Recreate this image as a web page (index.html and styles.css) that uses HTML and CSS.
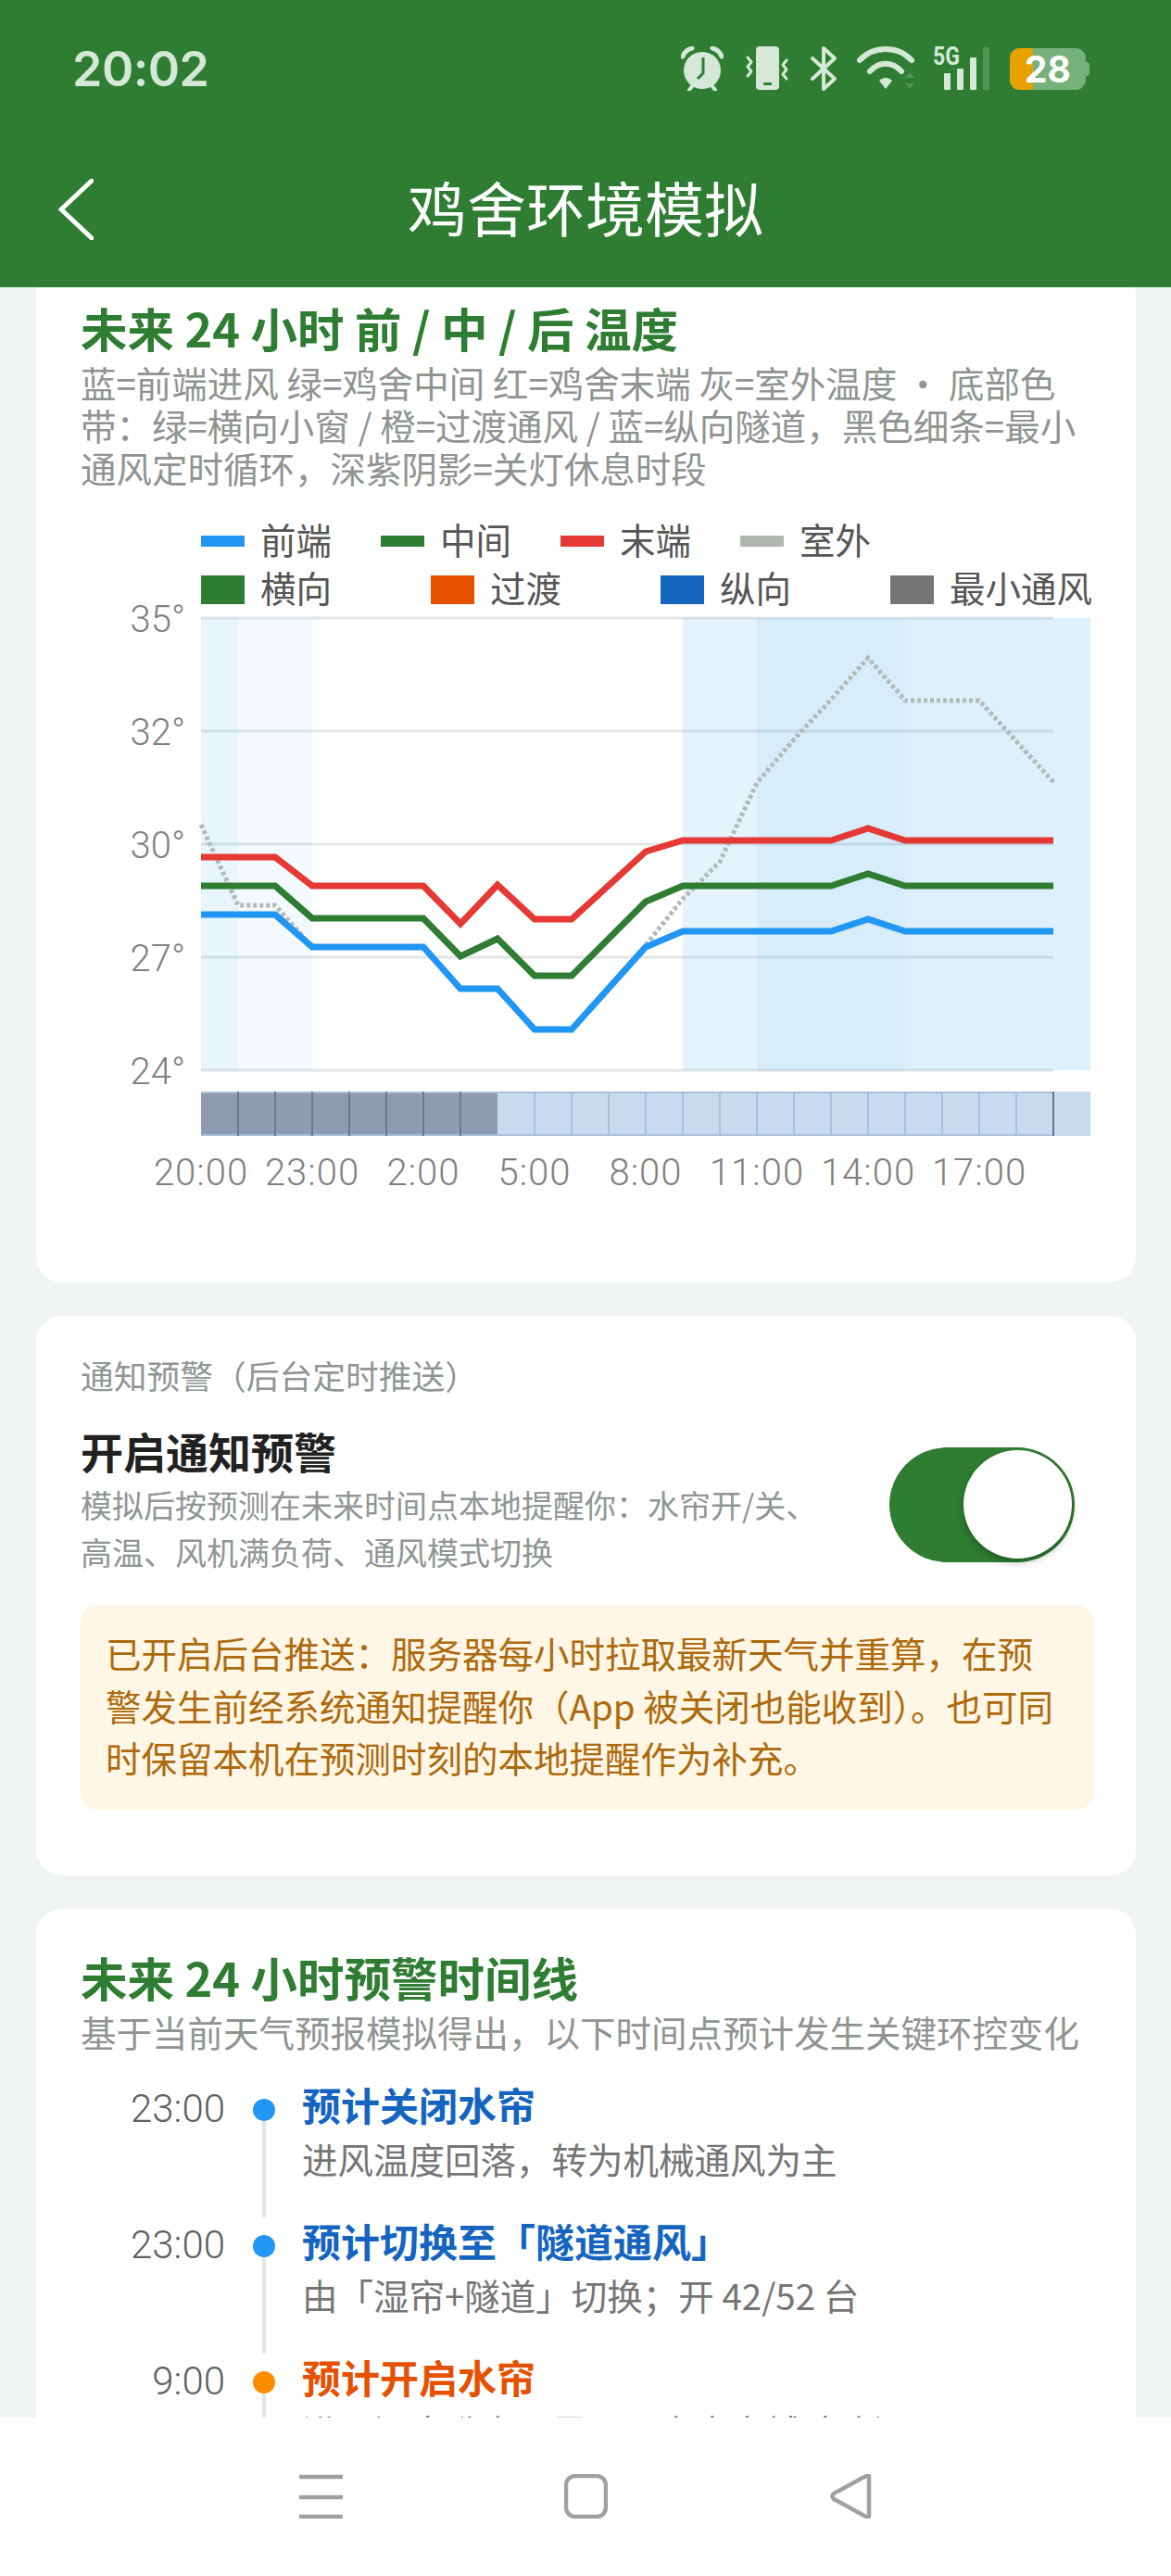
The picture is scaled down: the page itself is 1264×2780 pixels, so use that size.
FILE: index.html
```html
<!DOCTYPE html>
<html lang="zh-CN">
<head>
  <meta charset="UTF-8">
  <meta name="viewport" content="width=device-width, initial-scale=1.0">
  <title>鸡舍环境模拟</title>
  <link rel="stylesheet" href="styles.css">
</head>
<body>
  <div class="screen">
    <header class="top">
      <div class="status-bar">
        <span class="clock">20:02</span>
        <div class="status-icons">
          <svg class="ic-alarm" viewBox="0 0 46 48">
            <path class="ear" d="M2 11C4 5 8 3 12 2M44 11C42 5 38 3 34 2"/>
            <circle class="solid" cx="23" cy="26" r="20"/>
            <path class="feet" d="M9 47l4-5M37 47l-4-5"/>
            <path class="hand" d="M24 12v17l-6 6"/>
          </svg>
          <svg class="ic-phone" viewBox="0 0 48 48">
            <rect class="solid" x="12" y="0" width="25" height="47" rx="4"/>
            <rect class="hand-fill" x="20" y="39" width="9" height="3" rx="1"/>
            <path class="wave" d="M3 12l4 5-4 5 4 5-4 5M45 15l-4 5 4 5-4 5 4 5"/>
          </svg>
          <svg class="ic-bt" viewBox="0 0 30 48">
            <path class="bt" d="M3 13l24 22-12 11V2l12 11L3 35"/>
          </svg>
          <svg class="ic-wifi" viewBox="0 0 67 48">
            <path class="arc" d="M3 15C18 -1 44 -1 59 15"/>
            <path class="arc" d="M14 27C24 16 38 16 48 27"/>
            <path class="solid" d="M24 37c4-4 10-4 14 0l-7 9z"/>
            <path class="dim" d="M57 28l5 6H52zM57 46l5-6H52z"/>
          </svg>
          <svg class="ic-signal" viewBox="0 0 61 48">
            <text class="five-g" x="0" y="20" textLength="29" lengthAdjust="spacingAndGlyphs">5G</text>
            <rect class="solid" x="12" y="29" width="7" height="18" rx="1"/>
            <rect class="solid" x="26" y="24" width="7" height="23" rx="1"/>
            <rect class="solid" x="40" y="12" width="7" height="35" rx="1"/>
            <rect class="dim" x="54" y="1" width="7" height="46" rx="1"/>
          </svg>
          <div class="battery">
            <div class="battery-level"></div>
            <span class="battery-num">28</span>
          </div>
        </div>
      </div>
      <div class="app-bar">
        <svg class="back" viewBox="0 0 38 66">
          <path d="M36 2L3 33l33 31"/>
        </svg>
        <h1>鸡舍环境模拟</h1>
      </div>
    </header>

    <main class="scroll">
      <section class="card card-chart">
        <h2>未来 24 小时 前 / 中 / 后 温度</h2>
        <p class="sub">蓝=前端进风 绿=鸡舍中间 红=鸡舍末端 灰=室外温度 · 底部色带&#xFF1A;绿=横向小窗 / 橙=过渡通风 / 蓝=纵向隧道&#xFF0C;黑色细条=最小通风定时循环&#xFF0C;深紫阴影=关灯休息时段</p>

        <div class="legend legend-lines">
          <div class="lg-item"><i class="lg-line c-blue"></i>前端</div>
          <div class="lg-item"><i class="lg-line c-green"></i>中间</div>
          <div class="lg-item"><i class="lg-line c-red"></i>末端</div>
          <div class="lg-item"><i class="lg-line c-grey"></i>室外</div>
        </div>
        <div class="legend legend-modes">
          <div class="lg-item"><i class="lg-box c-green"></i>横向</div>
          <div class="lg-item"><i class="lg-box c-orange"></i>过渡</div>
          <div class="lg-item"><i class="lg-box c-navy"></i>纵向</div>
          <div class="lg-item"><i class="lg-box c-dark"></i>最小通风</div>
        </div>

        <svg class="chart" viewBox="8 657 1180 643">
          <path class="grid" d="M217 667H1137M217 789H1137M217 911H1137M217 1033H1137M217 1155H1137"/>

          <rect class="band" x="217" y="667" width="40" height="488" opacity=".1"/>
          <rect class="band" x="257" y="667" width="80" height="488" opacity=".06"/>
          <rect class="band" x="737" y="667" width="80" height="488" opacity=".12"/>
          <rect class="band" x="817" y="667" width="160" height="488" opacity=".19"/>
          <rect class="band" x="977" y="667" width="200" height="488" opacity=".155"/>

          <polyline class="ln ln-out" points="217,890 257,977 297,977 337,1022 457,1022 497,1067 537,1067 577,1111 617,1111 697,1020 737,970 777,930 817,845 857,798 897,755 937,710 977,756 1057,756 1097,800 1137,844"/>
          <polyline class="ln ln-red" points="217,925 297,925 337,956 457,956 497,997 537,955 577,992 617,992 697,919 737,907 897,907 937,894 977,907 1137,907"/>
          <polyline class="ln ln-green" points="217,956 297,956 337,991 457,991 497,1032 537,1013 577,1053 617,1053 697,973 737,956 897,956 937,943 977,956 1137,956"/>
          <polyline class="ln ln-blue" points="217,987 297,987 337,1022 457,1022 497,1067 537,1067 577,1111 617,1111 697,1022 737,1005 897,1005 937,992 977,1005 1137,1005"/>

          <rect class="strip-light" x="217" y="1178" width="960" height="48"/>
          <rect class="strip-dark" x="217" y="1178" width="320" height="48"/>
          <path class="tick-light" d="M577 1178v48M617 1178v48M657 1178v48M697 1178v48M737 1178v48M777 1178v48M817 1178v48M857 1178v48M897 1178v48M937 1178v48M977 1178v48M1017 1178v48M1057 1178v48M1097 1178v48M217 1179H1137M217 1225H1137"/>
          <path class="tick-dark" d="M257 1178v48M297 1178v48M337 1178v48M377 1178v48M417 1178v48M457 1178v48M497 1178v48M1137 1178v48"/>

          <text class="ax ax-y" x="200" y="682">35°</text>
          <text class="ax ax-y" x="200" y="804">32°</text>
          <text class="ax ax-y" x="200" y="926">30°</text>
          <text class="ax ax-y" x="200" y="1048">27°</text>
          <text class="ax ax-y" x="200" y="1170">24°</text>

          <text class="ax ax-x" x="217" y="1279">20:00</text>
          <text class="ax ax-x" x="337" y="1279">23:00</text>
          <text class="ax ax-x" x="457" y="1279">2:00</text>
          <text class="ax ax-x" x="577" y="1279">5:00</text>
          <text class="ax ax-x" x="697" y="1279">8:00</text>
          <text class="ax ax-x" x="817" y="1279">11:00</text>
          <text class="ax ax-x" x="937" y="1279">14:00</text>
          <text class="ax ax-x" x="1057" y="1279">17:00</text>
        </svg>
      </section>

      <section class="card card-notify">
        <div class="notify-label">通知预警&#xFF08;后台定时推送&#xFF09;</div>
        <div class="notify-row">
          <div class="notify-text">
            <div class="notify-title">开启通知预警</div>
            <div class="notify-desc">模拟后按预测在未来时间点本地提醒你&#xFF1A;水帘开/关、高温、风机满负荷、通风模式切换</div>
          </div>
          <div class="toggle"><div class="thumb"></div></div>
        </div>
        <div class="warn">已开启后台推送&#xFF1A;服务器每小时拉取最新天气并重算&#xFF0C;在预警发生前经系统通知提醒你&#xFF08;App 被关闭也能收到&#xFF09;。也可同时保留本机在预测时刻的本地提醒作为补充。</div>
      </section>

      <section class="card card-timeline">
        <h2>未来 24 小时预警时间线</h2>
        <p class="sub">基于当前天气预报模拟得出&#xFF0C;以下时间点预计发生关键环控变化</p>
        <div class="timeline">
          <div class="tl-item">
            <div class="tl-time">23:00</div>
            <div class="tl-axis"><i class="dot dot-blue"></i><i class="rail"></i></div>
            <div class="tl-body">
              <div class="tl-title t-blue">预计关闭水帘</div>
              <div class="tl-desc">进风温度回落&#xFF0C;转为机械通风为主</div>
            </div>
          </div>
          <div class="tl-item">
            <div class="tl-time">23:00</div>
            <div class="tl-axis"><i class="dot dot-blue"></i><i class="rail"></i></div>
            <div class="tl-body">
              <div class="tl-title t-blue">预计切换至「隧道通风」</div>
              <div class="tl-desc">由「湿帘+隧道」切换&#xFF1B;开 42/52 台</div>
            </div>
          </div>
          <div class="tl-item">
            <div class="tl-time">9:00</div>
            <div class="tl-axis"><i class="dot dot-orange"></i><i class="rail"></i></div>
            <div class="tl-body">
              <div class="tl-title t-orange">预计开启水帘</div>
              <div class="tl-desc">进风温度升高&#xFF0C;需要开启水帘辅助降温</div>
            </div>
          </div>
        </div>
      </section>
    </main>

    <nav class="nav-bar">
      <svg class="nav-ic" viewBox="0 0 47 48"><path d="M0 3H47M0 25H47M0 46H47"/></svg>
      <svg class="nav-ic" viewBox="0 0 47 48"><rect x="2" y="2" width="43" height="44" rx="10"/></svg>
      <svg class="nav-ic" viewBox="0 0 47 48"><path d="M43 3v42c0 2-2 2-3 1L5 27c-2-2-2-4 0-6L40 2c1-1 3-1 3 1z"/></svg>
    </nav>
  </div>
</body>
</html>
```

FILE: styles.css
```css
body {
  margin: 0;
  font-family: "Noto Sans CJK SC", "Noto Sans", sans-serif;
  background: #f1f5f2;
}
.screen {
  display: flex;
  flex-direction: column;
  height: 2780px;
  overflow: hidden;
}

/* header */
.top {
  background: #2e7d32;
  height: 310px;
  flex-shrink: 0;
}
.status-bar {
  display: flex;
  align-items: center;
  justify-content: space-between;
  height: 148px;
  padding: 0 88px 0 78px;
}
.clock {
  font-family: Inter, sans-serif;
  font-size: 52px;
  font-weight: 600;
  letter-spacing: -0.5px;
  color: #d5e8d7;
}
.status-icons {
  display: flex;
  align-items: center;
}
.status-icons svg {
  height: 48px;
  display: block;
}
.ic-alarm { width: 46px; margin-right: 23px; }
.ic-phone { width: 48px; margin-right: 22px; }
.ic-bt { width: 30px; margin-right: 21px; }
.ic-wifi { width: 67px; margin-right: 15px; }
.ic-signal { width: 61px; margin-right: 22px; }
.solid { fill: #d5e8d7; }
.dim { fill: #4f9656; }
.ear, .feet, .wave, .bt, .arc {
  fill: none;
  stroke: #d5e8d7;
  stroke-linecap: round;
  stroke-linejoin: round;
}
.ear { stroke-width: 5; }
.feet { stroke-width: 4; }
.wave { stroke-width: 3; }
.bt { stroke-width: 4; }
.arc { stroke-width: 6; }
.hand {
  fill: none;
  stroke: #2e7d32;
  stroke-width: 3;
}
.hand-fill { fill: #2e7d32; }
.five-g {
  font-family: Roboto, sans-serif;
  font-size: 27px;
  font-weight: 700;
  fill: #d5e8d7;
}
.battery {
  position: relative;
  width: 82px;
  height: 45px;
  margin-right: 4px;
  border-radius: 11px;
  background: #76b07a;
}
.battery::after {
  content: "";
  position: absolute;
  right: -4px;
  top: 15px;
  width: 4px;
  height: 15px;
  border-radius: 0 3px 3px 0;
  background: #76b07a;
}
.battery-level {
  width: 25px;
  height: 45px;
  border-radius: 11px 0 0 11px;
  background: #e8a200;
}
.battery-num {
  position: absolute;
  left: 0;
  right: 0;
  top: 0;
  text-align: center;
  font-family: Inter, sans-serif;
  font-size: 39px;
  line-height: 45px;
  font-weight: 700;
  color: #fff;
}
.app-bar {
  position: relative;
  height: 148px;
  display: flex;
  align-items: center;
  justify-content: center;
}
.back {
  position: absolute;
  left: 63px;
  top: 45px;
  width: 38px;
  height: 66px;
  fill: none;
  stroke: #fff;
  stroke-width: 5;
  stroke-linecap: round;
}
h1 {
  margin: 0;
  font-size: 64px;
  font-weight: 400;
  color: #fff;
}

/* cards */
.scroll {
  flex: 1;
  min-height: 0;
  overflow: hidden;
}
.card {
  background: #fff;
  margin: 0 38px 36px 39px;
  padding: 0 46px 0 48px;
  border-radius: 28px;
}
h2 {
  margin: 0;
  font-size: 50.5px;
  line-height: 60px;
  font-weight: 700;
  color: #2e7d32;
}
.sub {
  margin: 6px 0 0;
  font-size: 38.5px;
  line-height: 46px;
  color: #8f9491;
}
.card-chart {
  margin-top: -20px;
  padding-top: 33px;
  padding-bottom: 84px;
}
.legend {
  display: flex;
  margin-left: 130px;
  height: 42px;
}
.legend-lines {
  margin-top: 33px;
  column-gap: 53px;
}
.legend-modes {
  margin-top: 10px;
  column-gap: 107px;
}
.lg-item {
  display: flex;
  align-items: center;
  flex-shrink: 0;
  gap: 17px;
  font-size: 38.5px;
  line-height: 42px;
  white-space: nowrap;
  color: #555;
}
.lg-line {
  width: 47px;
  height: 12px;
  margin-top: 6px;
}
.lg-box {
  width: 47px;
  height: 31px;
  margin-top: 6px;
}
.c-blue { background: #2196f3; }
.c-green { background: #2e7d32; }
.c-red { background: #e53935; }
.c-grey { background: #b0b5ae; }
.c-orange { background: #e65100; }
.c-navy { background: #1565c0; }
.c-dark { background: #757575; }

/* chart */
.chart {
  display: block;
  width: 1180px;
  height: 643px;
  margin: 3px 0 0 -79px;
  overflow: visible;
}
.grid {
  fill: none;
  stroke: #e3e6e7;
  stroke-width: 3;
}
.band { fill: #2b9de6; }
.ln {
  fill: none;
  stroke-width: 7;
}
.ln-out {
  stroke: #b4b9b6;
  stroke-width: 5;
  stroke-dasharray: 4 3;
}
.ln-red { stroke: #e53935; }
.ln-green { stroke: #2e7d32; }
.ln-blue { stroke: #2196f3; }
.strip-light { fill: #c8daf0; }
.strip-dark { fill: #8f9bb3; }
.tick-light {
  fill: none;
  stroke: #a9c0dd;
  stroke-width: 2;
}
.tick-dark {
  fill: none;
  stroke: #6b7890;
  stroke-width: 2;
}
.ax {
  font-family: Roboto, sans-serif;
  font-size: 40px;
  font-weight: 300;
  fill: #808080;
}
.ax-y { text-anchor: end; }
.ax-x {
  text-anchor: middle;
  letter-spacing: 1px;
}

/* notify */
.card-notify {
  padding-top: 39px;
  padding-bottom: 71px;
}
.notify-label {
  font-size: 35.75px;
  line-height: 50px;
  color: #8f9693;
}
.notify-row {
  display: flex;
  justify-content: space-between;
  align-items: center;
  margin-top: 26px;
}
.notify-text {
  width: 820px;
}
.notify-title {
  font-size: 46px;
  line-height: 60px;
  font-weight: 700;
  color: #212121;
}
.notify-desc {
  margin-top: 3px;
  font-size: 34px;
  line-height: 51px;
  color: #8f9693;
}
.toggle {
  display: flex;
  justify-content: flex-end;
  align-items: center;
  width: 200px;
  height: 124px;
  margin: 12px 20px 0 0;
  padding-right: 3px;
  box-sizing: border-box;
  border-radius: 62px;
  background: #2e7d32;
}
.thumb {
  width: 117px;
  height: 117px;
  border-radius: 50%;
  background: #fff;
  box-shadow: 0 4px 8px rgba(0, 0, 0, 0.25);
}
.warn {
  margin-top: 32px;
  padding: 23px 27px 28px;
  border-radius: 18px;
  background: #fff6e6;
  font-size: 38.5px;
  line-height: 56.5px;
  color: #ad6a0c;
}

/* timeline */
.card-timeline {
  padding-top: 43px;
  margin-bottom: 0;
}
.timeline {
  margin-top: 31px;
}
.tl-item {
  display: flex;
}
.tl-time {
  width: 156px;
  padding-top: 5px;
  text-align: right;
  font-family: Roboto, sans-serif;
  font-size: 42px;
  font-weight: 300;
  line-height: 50px;
  color: #5f5f5f;
}
.tl-axis {
  display: flex;
  flex-direction: column;
  align-items: center;
  width: 83px;
}
.dot {
  width: 24px;
  height: 24px;
  margin-top: 19px;
  border-radius: 50%;
  flex-shrink: 0;
}
.dot-blue { background: #2196f3; }
.dot-orange { background: #fb8c00; }
.rail {
  width: 4px;
  flex: 1;
  background: #e2e4e3;
}
.tl-body {
  padding-bottom: 41px;
}
.tl-title {
  font-size: 42px;
  line-height: 50px;
  font-weight: 700;
}
.t-blue { color: #1565c0; }
.t-orange { color: #e65100; }
.tl-desc {
  margin-top: 10px;
  font-size: 38.5px;
  line-height: 46px;
  color: #757575;
}

/* bottom nav */
.nav-bar {
  flex-shrink: 0;
  height: 171px;
  background: #fff;
  display: flex;
  justify-content: center;
  gap: 239px;
  padding-top: 61px;
  box-sizing: border-box;
}
.nav-ic {
  width: 47px;
  height: 48px;
  fill: none;
  stroke: #a0a0a0;
  stroke-width: 4.5;
}
```
